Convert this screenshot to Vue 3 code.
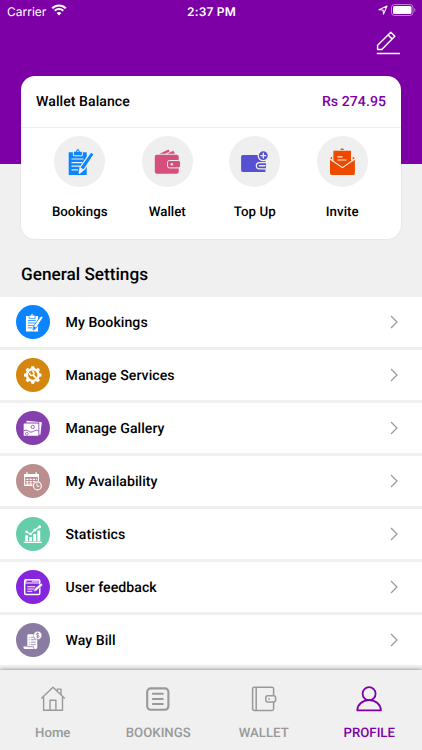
<template>
  <div class="screen">
    <header class="hero">
      <div class="status-bar">
        <div class="carrier">
          <span>Carrier</span>
          <svg width="16" height="12" viewBox="0 0 16 12" fill="none" stroke="#fff">
            <path d="M1.2 4.2a9.6 9.6 0 0 1 13.6 0" stroke-width="2" />
            <path d="M3.7 6.8a6.1 6.1 0 0 1 8.6 0" stroke-width="2" />
            <path d="M8 11.6 5.6 9.1a3.5 3.5 0 0 1 4.8 0z" fill="#fff" stroke="none" />
          </svg>
        </div>
        <div class="time">2:37 PM</div>
        <div class="status-right">
          <svg width="10" height="10" viewBox="0 0 10 10" fill="none" stroke="#fff" stroke-width="1.1" stroke-linejoin="round">
            <path d="M.9 4.7 9 1 5.5 9.1 5.1 5z" />
          </svg>
          <svg width="25" height="12" viewBox="0 0 25 12">
            <rect x=".5" y=".5" width="21.5" height="11" rx="3" fill="none" stroke="#fff" stroke-opacity=".5" />
            <rect x="2" y="2" width="18.5" height="8" rx="1.6" fill="#fff" />
            <path d="M23.3 4v4c1.4-.6 1.4-3.4 0-4z" fill="#fff" fill-opacity=".55" />
          </svg>
        </div>
      </div>
      <button class="edit">
        <svg width="24" height="24" viewBox="0 0 24 24" fill="none" stroke="#fff" stroke-width="1.5" stroke-linejoin="round" stroke-linecap="round">
          <path d="M1.6 18.6v-4.4L14.8 1.3l4 3.9L5.8 18.6zM12.1 4l3.9 3.9" />
          <path d="M1.4 22.4h22" />
        </svg>
      </button>
    </header>

    <section class="card">
      <div class="balance">
        <span>Wallet Balance</span>
        <span class="amount">Rs 274.95</span>
      </div>
      <div class="actions">
        <div v-for="a in actions" :key="a.label" class="action">
          <svg class="action-icon" viewBox="0 0 51 51" :style="{ color: a.color, '--bg': '#efefef' }" v-html="icons[a.icon]"></svg>
          <span>{{ a.label }}</span>
        </div>
      </div>
    </section>

    <h2 class="title">General Settings</h2>

    <ul class="list">
      <li v-for="s in settings" :key="s.label" class="row">
        <svg
          class="row-icon"
          :viewBox="s.icon === 'clipboard' ? '0 0 51 51' : '0 0 35 35'"
          :style="{ background: s.color, '--bg': s.color }"
          v-html="icons[s.icon]"
        ></svg>
        <span class="row-label">{{ s.label }}</span>
        <svg class="chevron" width="8" height="14" viewBox="0 0 8 14" fill="none" stroke="#999" stroke-width="1.2">
          <path d="M1 1l6 6-6 6" />
        </svg>
      </li>
    </ul>

    <nav class="tabs">
      <div v-for="t in tabs" :key="t.label" class="tab" :class="{ active: t.active }">
        <svg width="26" height="26" viewBox="0 0 26 26" fill="none" stroke="currentColor" v-html="icons[t.icon]"></svg>
        <span>{{ t.label }}</span>
      </div>
    </nav>
  </div>
</template>

<script setup>
const actions = [
  { label: 'Bookings', icon: 'clipboard', color: '#0a84ff' },
  { label: 'Wallet', icon: 'wallet', color: '#d6507e' },
  { label: 'Top Up', icon: 'topup', color: '#5650d3' },
  { label: 'Invite', icon: 'invite', color: '#ed4a00' },
];

const settings = [
  { label: 'My Bookings', icon: 'clipboard', color: '#0a84ff' },
  { label: 'Manage Services', icon: 'gear', color: '#d4860f' },
  { label: 'Manage Gallery', icon: 'gallery', color: '#8640ad' },
  { label: 'My Availability', icon: 'calendar', color: '#bc8f8f' },
  { label: 'Statistics', icon: 'stats', color: '#66cdaa' },
  { label: 'User feedback', icon: 'feedback', color: '#8526dd' },
  { label: 'Way Bill', icon: 'bill', color: '#8a7ba3' },
];

const tabs = [
  { label: 'Home', icon: 'tabHome' },
  { label: 'BOOKINGS', icon: 'tabBookings' },
  { label: 'WALLET', icon: 'tabWallet' },
  { label: 'PROFILE', icon: 'tabProfile', active: true },
];

// teeth of the gear, every 45 degrees
const teeth = [0, 45, 90, 135, 180, 225, 270, 315]
  .map((d) => `<path d="M14.9 11.5l.7-3.1h2.8l.7 3.1z" transform="rotate(${d} 17 17.3)"/>`)
  .join('');

// currentColor is the glyph, --bg is whatever lies behind it
const icons = {
  clipboard: `
    <path fill="currentColor" d="M14.7 16.3h18V39h-18z"/>
    <path fill="currentColor" stroke="var(--bg)" stroke-width="1" d="M19.4 15.2h2.4c.3-3.2 3.8-3.2 4.1 0h2.4v4.6h-8.9z"/>
    <circle cx="23.9" cy="15.2" r=".8" fill="var(--bg)"/>
    <path fill="none" stroke="var(--bg)" stroke-width="1.2" d="M17.5 23h12M17.5 26.6h11M17.5 30.2h8.5M17.5 33.8h6.5"/>
    <path fill="currentColor" stroke="var(--bg)" stroke-width="1.2" stroke-linejoin="round" d="M36.8 16.1l3.4 2-9.9 15.2-4.8 4-.3-1.1.9-5z"/>
    <path fill="var(--bg)" d="M26 31.3l3.9 2.3-3.9 3.4z"/>`,
  wallet: `
    <path fill="currentColor" d="M17.5 17.7l9-4.2 1.2 2-4.5 2.2zM25 17.7l6.3-2.9 1.8 2.9zM14.8 18.7h19.9a2 2 0 0 1 2 2v15a2 2 0 0 1-2 2H14.8a2 2 0 0 1-2-2v-15a2 2 0 0 1 2-2z"/>
    <rect x="25.5" y="24.5" width="13" height="7.4" rx="2" fill="currentColor" stroke="var(--bg)" stroke-width="1"/>
    <circle cx="29.8" cy="28.2" r="1.2" fill="var(--bg)"/>`,
  topup: `
    <path fill="currentColor" d="M13.8 19h22.6v17H13.8a1.7 1.7 0 0 1-1.7-1.7V20.7a1.7 1.7 0 0 1 1.7-1.7z"/>
    <path fill="currentColor" stroke="var(--bg)" stroke-width="1.2" d="M37 26.7h-6.7c-4 0-4 6.2 0 6.2H37"/>
    <path stroke="var(--bg)" stroke-width="1.6" stroke-linecap="round" d="M30.5 29.8h5.5"/>
    <circle cx="34.3" cy="19.6" r="5.1" fill="currentColor" stroke="var(--bg)" stroke-width="1.3"/>
    <path stroke="var(--bg)" stroke-width="1.3" d="M31.4 19.6h5.8M34.3 16.7v5.8"/>`,
  invite: `
    <path fill="currentColor" d="M23.4 14c.3-1.9 3.2-1.9 3.5 0zM16.4 14.8H34v13l-8.8 5.8-8.8-5.8zM13 22.4l2.2-2v3.3zM37.9 22.4l-2.2-2v3.3z"/>
    <path fill="none" stroke="var(--bg)" stroke-width="1.1" d="M20.5 20.9h5M20.5 24h9"/>
    <path fill="currentColor" d="M13 23.5l12.4 9 12.5-9v13.7a1.8 1.8 0 0 1-1.8 1.8H14.8a1.8 1.8 0 0 1-1.8-1.8z"/>
    <path fill="none" stroke="var(--bg)" stroke-width="1.1" d="M13 23l12.4 8.7L37.9 23"/>`,
  gear: `
    <g fill="#fff">${teeth}</g>
    <circle cx="17" cy="17.3" r="5.9" fill="none" stroke="#fff" stroke-width="2.4"/>
    <path fill="none" stroke="#fff" stroke-width="1.5" d="M13.9 15.4a2.2 2.2 0 1 0 2.3-2"/>
    <path stroke="#fff" stroke-width="1.9" stroke-linecap="round" d="M17.6 17.6l2.7 2.7"/>`,
  gallery: `
    <path fill="#fff" d="M10.5 11.7l.3-1.9 15.4 1.6-1.4 12.8-1.2-.1V11.7z"/>
    <rect x="7.8" y="12.6" width="15" height="12.6" rx=".7" fill="#fff"/>
    <circle cx="17" cy="16.2" r="1.7" fill="none" stroke="var(--bg)" stroke-width=".8"/>
    <path fill="none" stroke="var(--bg)" stroke-width=".9" d="M7.8 20.2c3.6-2.2 4.7 1 7.2 1.2s4.8-3.2 7.8-1.2"/>
    <circle cx="11" cy="23" r="1.4" fill="none" stroke="var(--bg)" stroke-width=".7"/>`,
  calendar: `
    <path fill="none" stroke="#fff" stroke-width="1.1" d="M8.8 10.8h14v10.9h-14z"/>
    <path fill="#fff" d="M8.3 10.3h15v3h-15zM10.4 8.4h1.4v3h-1.4zM19.8 8.4h1.4v3h-1.4z"/>
    <path stroke="#fff" stroke-width="1.5" stroke-dasharray="2.2 1.1" d="M10.5 15.6h11M10.5 18h11M10.5 20.3h8"/>
    <circle cx="21.7" cy="22.2" r="5" fill="var(--bg)"/>
    <circle cx="21.7" cy="22.2" r="4" fill="none" stroke="#fff" stroke-width="1.2"/>
    <path fill="none" stroke="#fff" stroke-width="1" d="M21.3 19.7v2.9h2.3"/>`,
  stats: `
    <path fill="#fff" d="M7.8 25.2h18.4v1.1H7.8zM9.3 18.5h2.9v6.2H9.3zM13.4 20.3h2.9v4.4h-2.9zM17.5 17.2h2.9v7.5h-2.9zM21.7 13.8h2.9v10.9h-2.9z"/>
    <path fill="none" stroke="#fff" stroke-width="1.2" d="M10.8 15.2l4 2 4.2-3.8 4.4-3.3"/>
    <g fill="#fff"><circle cx="10.8" cy="15.2" r="1.4"/><circle cx="14.8" cy="17.2" r="1.3"/><circle cx="19" cy="13.3" r="1.4"/><circle cx="23.9" cy="10" r="1.6"/></g>`,
  feedback: `
    <rect x="8.8" y="10" width="15.3" height="14.8" rx="1.2" fill="none" stroke="#fff" stroke-width="1.5"/>
    <path fill="none" stroke="#fff" stroke-width="1" d="M9 13.2h15M11.5 17h8M11.5 19.3h7M11.5 21.6h5"/>
    <path stroke="#fff" stroke-width="1" d="M9 11.3h2M16 11.3h7"/>
    <path fill="#fff" stroke="var(--bg)" stroke-width=".6" d="M25.3 13.3l1.9 2-6.3 5.8-3.1.9.9-2.9z"/>`,
  bill: `
    <path fill="#fff" d="M13 11.3h5.2v4.3h3.4v9.2a1.5 1.5 0 0 1-1.5 1.5H9c-1 0-1.5-1.1-1.5-2.5h4V12.8a1.5 1.5 0 0 1 1.5-1.5z"/>
    <path fill="none" stroke="var(--bg)" stroke-width=".8" d="M13 14.5h1M15 14.5h3M13 17h1M15 17h5M13 19.5h1M15 19.5h5M13 22h1M15 22h5M11.4 24h6.2c0 1.2.4 1.8 1 2.3"/>
    <circle cx="22" cy="12.6" r="4.2" fill="#fff" stroke="var(--bg)" stroke-width=".5"/>
    <path fill="none" stroke="var(--bg)" stroke-width=".8" d="M23.4 11.2c-.5-1-2.8-.9-2.8.3s2.9.8 2.9 2.1-2.5 1.3-3 .2M22 9.8v5.8"/>`,
  tabHome: `
    <g stroke-width="1.4" stroke-linejoin="round">
      <path d="M1.3 12.6L13 1.2l11.8 11.4M3.6 10.9v13.3h18.9V10.9M10 24V14.3h5.9V24"/>
      <path d="M17.2 5V3.1h3.8v5.6"/>
    </g>`,
  tabBookings: `
    <rect x="2.2" y="2.4" width="21.2" height="21.4" rx="3.5" stroke-width="2.1"/>
    <path stroke-width="2" stroke-linecap="round" d="M7.9 7.8h9.9M7.9 13h9.9M7.9 18.1h9.9"/>`,
  tabWallet: `
    <g stroke-width="1.5">
      <path d="M22.6 9.8V2.7c0-.8-.6-1.4-1.4-1.4H3.4C2.4 1.3 1.6 2 1.6 3v19.4c0 1.2.8 2 1.9 2h17.7c.8 0 1.4-.6 1.4-1.4v-6.9M5.2 1.3v23"/>
      <rect x="14.8" y="9.8" width="9.8" height="6.3" rx="2"/>
      <path d="M17.3 12.9h1.6"/>
    </g>`,
  tabProfile: `
    <g stroke-width="1.8" stroke-linejoin="round">
      <circle cx="13.1" cy="7.7" r="6.5"/>
      <path d="M1.3 24.3C1.6 18.2 6.4 14.2 13.1 14.2s11.5 4 11.8 10.1z"/>
    </g>`,
};
</script>

<style>
body {
  background: #f0f0f0;
}
</style>

<style scoped>
.screen {
  width: 422px;
  height: 750px;
  overflow: hidden;
  display: flex;
  flex-direction: column;
  background: #f0f0f0;
  color: #000;
  font-family: Roboto, "Liberation Sans", sans-serif;
  font-weight: 500;
  text-rendering: geometricPrecision;
}

.hero {
  height: 164px;
  flex: none;
  background: #7c00a5;
  color: #fff;
}

.status-bar {
  display: grid;
  grid-template-columns: 1fr auto 1fr;
  align-items: center;
  height: 22px;
  padding: 0 6px 0 7px;
  font-family: Inter, "Liberation Sans", sans-serif;
  font-size: 12px;
}

.carrier {
  display: flex;
  align-items: center;
  gap: 4.5px;
  font-weight: 400;
}

.carrier svg {
  margin-bottom: 2px;
}

.time {
  font-weight: 600;
  letter-spacing: 0.2px;
}

.status-right {
  display: flex;
  align-items: center;
  justify-content: flex-end;
  gap: 3px;
  margin-bottom: 2px;
}

.edit {
  display: block;
  margin: 9px 22px 0 auto;
  padding: 0;
  border: 0;
  background: none;
}

.edit svg {
  display: block;
}

.card {
  flex: none;
  height: 163px;
  margin: -88px 21px 0;
  border-radius: 14px;
  background: #fff;
  box-shadow: 0 0 2px rgba(0, 0, 0, 0.12);
}

.balance {
  display: flex;
  justify-content: space-between;
  align-items: center;
  box-sizing: border-box;
  height: 52px;
  padding: 1px 15px 0;
  border-bottom: 1px solid #efefef;
  font-size: 14.1px;
  letter-spacing: 0.05px;
}

.amount {
  color: #7c00a5;
}

.actions {
  display: grid;
  grid-template-columns: repeat(4, 1fr);
  padding: 8px 15px 0;
}

.action {
  display: flex;
  flex-direction: column;
  align-items: center;
  gap: 18px;
  font-size: 13.3px;
  line-height: 16px;
  letter-spacing: 0.02px;
}

.action-icon {
  width: 51px;
  height: 51px;
  border-radius: 50%;
  background: #efefef;
}

.title {
  flex: none;
  height: 58px;
  margin: 0;
  padding: 7px 21px 0;
  box-sizing: border-box;
  font-size: 17.2px;
  font-weight: 500;
  line-height: 58px;
}

.list {
  flex: 1;
  min-height: 0;
  margin: 0;
  padding: 0;
  overflow: hidden;
  list-style: none;
}

.row {
  display: flex;
  align-items: center;
  height: 50px;
  margin-bottom: 3px;
  padding: 0 24px 0 15.5px;
  background: #fff;
}

.row-icon {
  width: 34.5px;
  height: 34.5px;
  border-radius: 50%;
  color: #fff;
}

.row-label {
  flex: 1;
  margin-left: 15.5px;
  padding-top: 1px;
  font-size: 14.1px;
  letter-spacing: 0.05px;
}

.tabs {
  position: relative;
  flex: none;
  display: grid;
  grid-template-columns: repeat(4, 1fr);
  height: 80px;
  background: #f0f0f0;
  box-shadow: 0 0 4px rgba(0, 0, 0, 0.5);
}

.tab {
  display: flex;
  flex-direction: column;
  align-items: center;
  gap: 14px;
  padding-top: 16px;
  color: #999;
  font-size: 13.2px;
  line-height: 16px;
}

.tab.active {
  color: #7c00a5;
}
</style>
